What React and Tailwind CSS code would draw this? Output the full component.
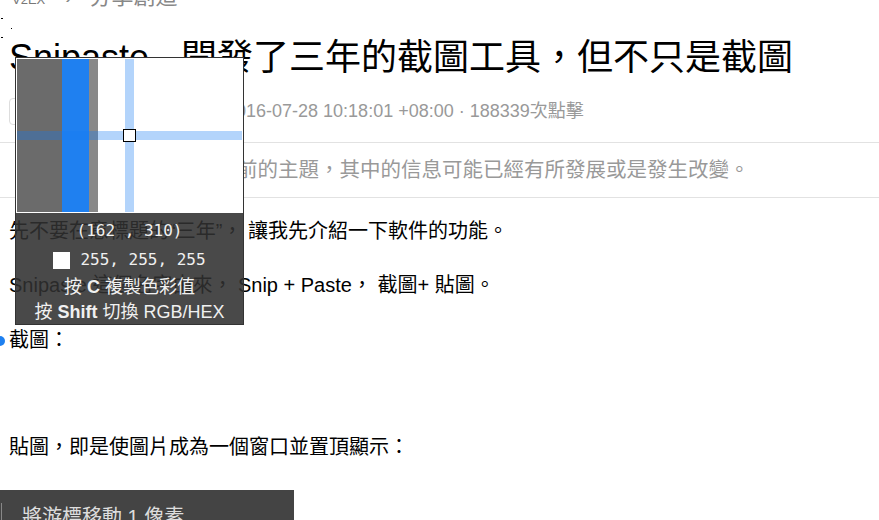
import React from 'react';

const sans = { fontFamily: '"Liberation Sans", "Noto Sans CJK TC", sans-serif' };
const mono = { fontFamily: '"DejaVu Sans Mono", "Liberation Mono", monospace' };

const Magnifier = () => {
    return (
        <div className="absolute left-[15px] top-[57px] w-[229px] h-[268px] border border-[#333] bg-[rgba(48,48,48,0.88)]">
            {/* zoomed pixels */}
            <div className="relative w-[227px] h-[155px] border border-white bg-white overflow-hidden">
                <div className="flex h-full">
                    <div className="w-[45px] h-full bg-[#6b6b6b]" />
                    <div className="w-[27px] h-full bg-[#1f80f0]" />
                    <div className="w-[9px] h-full bg-[#898989]" />
                    <div className="flex-1 h-full bg-white" />
                </div>
                <div className="absolute left-0 right-0 top-[72px] h-[9px] bg-[rgba(20,122,242,0.32)]" />
                <div className="absolute top-0 bottom-0 left-[108px] w-[9px] bg-[rgba(20,122,242,0.32)]" />
                <div className="absolute left-[106px] top-[70px] w-[13px] h-[13px] bg-white border-[1.5px] border-black" />
            </div>

            {/* info text */}
            <div className="flex flex-col items-center text-[#f0f0f0] pt-[4px]">
                <div className="h-[28px] leading-[28px] text-[16px]" style={mono}>(162 , 310)</div>
                <div className="flex items-center gap-[10px] h-[30px]">
                    <div className="w-[17px] h-[17px] bg-white" />
                    <span className="text-[16px]" style={mono}>255, 255, 255</span>
                </div>
                <div className="h-[24px] leading-[24px] text-[18px]" style={sans}>
                    按 <b>C</b> 複製色彩值
                </div>
                <div className="h-[26px] leading-[26px] text-[18px]" style={sans}>
                    按 <b>Shift</b> 切換 RGB/HEX
                </div>
            </div>
        </div>
    );
};

export default function App() {
    return (
        <div className="relative w-[879px] h-[520px] overflow-hidden bg-white" style={sans}>
            {/* breadcrumb */}
            <div className="flex items-baseline pl-[12px] h-[28px] -mt-[17px] leading-[28px] text-[#888]">
                <span className="text-[13px] text-[#777]">V2EX</span>
                <span className="text-[22px] ml-[20px]">›</span>
                <span className="text-[22px] ml-[17px]">分享創造</span>
            </div>

            {/* header */}
            <div className="border-b border-[#e2e2e2] pb-[17px]">
                <h1 className="pl-[9px] mt-[23px] h-[48px] leading-[48px] text-[36px] text-black">
                    Snipaste - 開發了三年的截圖工具，但不只是截圖
                </h1>
                <div className="flex items-center pl-[9px] mt-[15px] h-[28px] text-[18px] text-[#999]">
                    <div className="w-[120px] h-[27px] rounded-[4px] border border-[#ddd]" />
                    <span className="ml-[36px]">Ltrust · 2016-07-28 10:18:01 +08:00 · 188339次點擊</span>
                </div>
            </div>

            {/* notice */}
            <div className="flex items-center pl-[16px] h-[55px] border-b border-[#e2e2e2] text-[20.5px] text-[#999]">
                這是一個創建於 2879 天前的主題，其中的信息可能已經有所發展或是發生改變。
            </div>

            {/* body */}
            <div className="pl-[9px] text-[20px] leading-[30px] text-black">
                <p className="mt-[18px]">先不要在意標題的“三年”， 讓我先介紹一下軟件的功能。</p>
                <p className="mt-[24px]">Snipaste 這個名字由來， Snip + Paste， 截圖+ 貼圖。</p>
                <p className="mt-[25px]">截圖：</p>
                <p className="mt-[77px]">貼圖，即是使圖片成為一個窗口並置頂顯示：</p>
            </div>

            {/* stray marks */}
            <div className="absolute left-[1px] top-[18px] w-[2px] h-[1px] bg-black" />
            <div className="absolute left-[11px] top-[28px] w-[1px] h-[1px] bg-black" />
            <div className="absolute left-[1px] top-[37px] w-[2px] h-[1px] bg-black" />

            {/* blue cursor dot */}
            <div className="absolute -left-[5px] top-[336px] w-[10px] h-[10px] rounded-full bg-[#1e80f0]" />

            <Magnifier />

            {/* bottom tooltip */}
            <div className="absolute left-0 top-[490px] w-[294px] h-[40px] bg-[#444]">
                <div className="absolute left-[1px] top-[13px] w-[1px] h-[30px] bg-[#888]" />
                <div className="pl-[22px] pt-[13px] text-[20px] leading-[28px] text-[#ddd]">將游標移動 1 像素</div>
            </div>
        </div>
    );
}
